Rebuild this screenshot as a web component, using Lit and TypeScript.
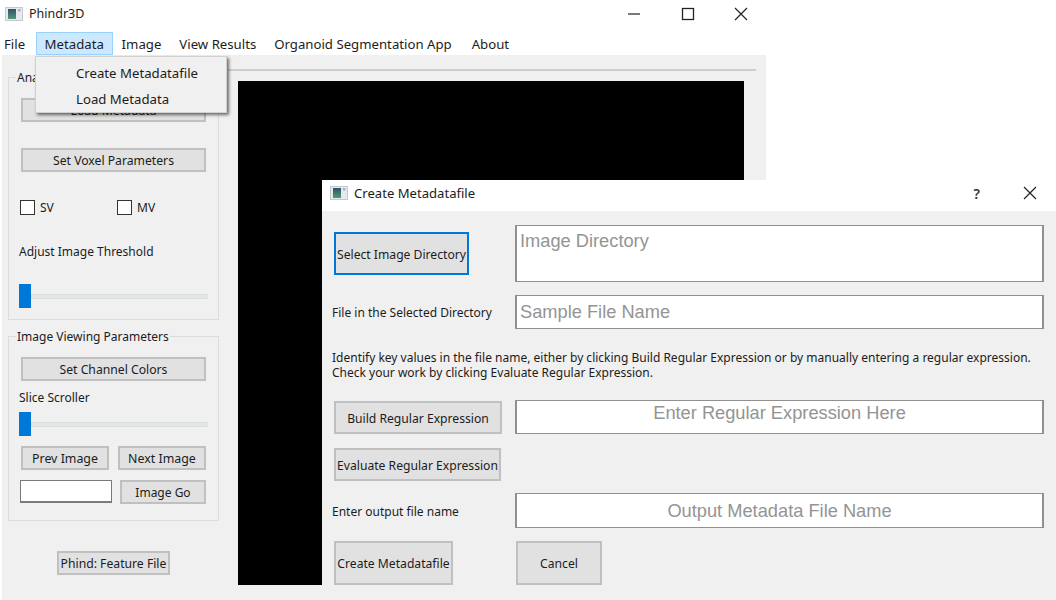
import { LitElement, html, css, svg } from "lit";
import { customElement } from "lit/decorators.js";

const appIcon = html`<svg class="appicon" width="19" height="16" viewBox="0 0 19 16">
  <defs><linearGradient id="g" x1="0" y1="0" x2="0" y2="1"><stop offset="0" stop-color="#33506a"/><stop offset="1" stop-color="#4f9a78"/></linearGradient></defs>
  <rect x="0.5" y="1.5" width="17" height="13" fill="#e6eaec" stroke="#c4cacd"/>
  <rect x="3" y="3" width="8" height="10" fill="url(#g)"/>
  <rect x="13" y="3" width="2.5" height="2.5" fill="#9fb4c4"/>
</svg>`;

const closeIcon = svg`<path d="M1 1 L13 13 M13 1 L1 13" stroke="#222" stroke-width="1.2" fill="none"/>`;

@customElement("app-root")
export class AppRoot extends LitElement {
  static styles = css`
    :host {
      display: block;
      position: relative;
      width: 1056px;
      height: 600px;
      overflow: hidden;
      background: #fff;
      font-family: "Noto Sans", "Open Sans", sans-serif;
      font-size: 12px;
      color: #1c1c1c;
    }
    * { box-sizing: border-box; }
    .win { position: absolute; display: flex; flex-direction: column; background: #fff; }
    .main { left: 0; top: 0; width: 766px; height: 600px; }
    .dialog { left: 322px; top: 180px; width: 734px; height: 420px; }
    .titlebar { display: flex; align-items: center; height: 30px; flex: none; padding: 0 0 3px 5px; font-size: 12.5px; }
    .title { margin-left: 5px; }
    .controls { margin-left: auto; display: flex; align-items: center; }
    .main .controls { gap: 39.5px; padding-right: 18px; }
    .ctl { display: block; }
    .menubar { display: flex; height: 25px; flex: none; padding-top: 2px; font-size: 13.2px; }
    .menubar span { display: flex; align-items: center; height: 23px; padding: 0 8px; border: 1px solid transparent; }
    .menubar span:first-child { padding: 0 9.5px 0 3px; }
    .menubar span.active { background: #cce8ff; border-color: #99d1ff; width: 77px; padding: 0 8px; }
    .menubar span:last-child { margin-left: 2px; }
    .content { flex: 1; margin-left: 2px; background: #f0f0f0; display: flex; min-height: 0; }
    .left { width: 236px; flex: none; padding: 22px 0 0 6px; display: flex; flex-direction: column; align-items: flex-start; }
    .group { position: relative; width: 211px; border: 1px solid #dcdcdc; padding: 0 12px; }
    .g1 { height: 243px; padding-top: 20px; }
    .g2 { height: 185px; margin-top: 16px; padding-top: 20px; }
    .legend { position: absolute; left: 7px; top: -8px; background: #f0f0f0; padding: 0 1px; line-height: 15px; white-space: nowrap; }
    .btn { display: flex; align-items: center; justify-content: center; background: #e1e1e1; border: 2px solid #c0c0c0; height: 24px; white-space: nowrap; flex: none; }
    .wide { width: 185px; font-size: 12.2px; }
    .g1 .b2 { margin-top: 26px; }
    .checks { display: flex; margin: 28px 0 0 -1px; height: 15px; align-items: center; }
    .check { display: flex; flex: none; align-items: center; gap: 5px; font-size: 12px; width: 97px; }
    .box { width: 15px; height: 15px; background: #fff; border: 1px solid #333; flex: none; }
    .lab { line-height: 16px; margin-left: -2px; }
    .g1 .lab { margin-top: 29px; }
    .slider { display: flex; align-items: center; height: 24px; margin-left: -2px; width: 189px; }
    .thumb { width: 12px; height: 24px; background: #0078d7; flex: none; }
    .track { flex: 1; height: 5px; background: #e3e6e6; border: 1px solid #dcdfdf; }
    .g1 .slider { margin-top: 24px; }
    .g2 .lab { margin-top: 9px; }
    .g2 .slider { margin-top: 6px; }
    .pair { display: flex; justify-content: space-between; margin-top: 10px; font-size: 12.4px; }
    .pair .btn { width: 88px; }
    .pair2 { display: flex; justify-content: space-between; margin: 10px 0 0 -1px; }
    .smallinput { width: 92px; height: 23px; background: #fff; border: 1px solid #7a7a7a; border-width: 1px 1px 2px 1px; }
    .pair2 .btn { width: 86px; }
    .phind { width: 113px; margin: 30px 0 0 49px; font-size: 12.2px; }
    .right { flex: 1; padding: 14px 10px 15px 0; display: flex; flex-direction: column; }
    .rule { height: 2px; background: #cdcdcd; flex: none; margin-left: -10px; }
    .canvas { flex: 1; background: #000; margin: 10px 12px 0 0; }
    .menu { position: absolute; left: 35px; top: 56px; width: 192px; height: 57px; background: #f0f0f0; border: 1px solid #d0d0d0; box-shadow: 2px 2px 3px rgba(0,0,0,.55); padding: 3px 0 0 40px; font-size: 13.2px; z-index: 2; }
    .menu div { height: 26px; display: flex; align-items: center; }
    .dialog .titlebar { padding-left: 8px; padding-bottom: 4px; font-size: 13.1px; }
    .dialog .title { margin-left: 5px; }
    .dialog .controls { gap: 43px; padding-right: 19px; }
    .help { font-size: 14px; font-weight: 600; color: #333; }
    .dbody { flex: 1; margin-top: 1px; background: #f0f0f0; padding: 14px 12px 0 10px; display: grid; grid-template-columns: 183px 529px; grid-template-rows: 57px 47px 71px 34px 47px 47px 57px; align-items: end; }
    .dbody > * { min-width: 0; }
    .dbody .btn { font-size: 12.15px; }
    .b-select { width: 135px; height: 43px; margin: 0 0 7px 2px; padding-top: 2px; }
    .dbody .b-select { border-color: #0078d7; }
    .field { background: #fff; border: 1px solid #909090; border-width: 1px 2px 1px 2px; font-family: "Liberation Sans", Arial, sans-serif; font-size: 18.25px; color: #949494; display: flex; align-items: center; padding-left: 3px; white-space: nowrap; }
    .field.ta { height: 57px; align-items: flex-start; padding-top: 4px; line-height: 22px; }
    .field.f34 { height: 34px; }
    .field.f35 { height: 35px; }
    .field.c { justify-content: center; padding-left: 0; }
    .field.up { padding-bottom: 9px; }
    .dlabel { white-space: nowrap; height: 34px; display: flex; align-items: center; }
    .para { grid-column: 1 / 3; line-height: 15px; white-space: nowrap; align-self: center; padding-top: 1px; }
    .r3 { margin-left: 2px; width: 168px; height: 33px; padding-top: 1px; }
    .r4 { grid-column: 1 / 3; margin-left: 2px; width: 167px; height: 33px; padding-top: 1px; }
    .r6a { margin-left: 2px; width: 119px; height: 44px; padding-top: 1px; }
    .r6b { margin-left: 1px; width: 86px; height: 44px; padding-top: 1px; }
  `;

  render() {
    return html`
      <div class="win main">
        <div class="titlebar">
          ${appIcon}<span class="title">Phindr3D</span>
          <div class="controls">
            <svg class="ctl" width="14" height="14" viewBox="0 0 14 14"><path d="M1 7H13" stroke="#222" stroke-width="1.2"/></svg>
            <svg class="ctl" width="14" height="14" viewBox="0 0 14 14"><rect x="1.5" y="1.5" width="11" height="11" fill="none" stroke="#222" stroke-width="1.3"/></svg>
            <svg class="ctl" width="14" height="14" viewBox="0 0 14 14">${closeIcon}</svg>
          </div>
        </div>
        <div class="menubar">
          <span>File</span><span class="active">Metadata</span><span>Image</span><span>View Results</span><span>Organoid Segmentation App</span><span>About</span>
        </div>
        <div class="content">
          <div class="left">
            <div class="group g1">
              <div class="legend">Analysis Parameters</div>
              <div class="btn wide">Load Metadata</div>
              <div class="btn wide b2">Set Voxel Parameters</div>
              <div class="checks">
                <div class="check"><div class="box"></div>SV</div>
                <div class="check"><div class="box"></div>MV</div>
              </div>
              <div class="lab">Adjust Image Threshold</div>
              <div class="slider"><div class="thumb"></div><div class="track"></div></div>
            </div>
            <div class="group g2">
              <div class="legend">Image Viewing Parameters</div>
              <div class="btn wide">Set Channel Colors</div>
              <div class="lab">Slice Scroller</div>
              <div class="slider"><div class="thumb"></div><div class="track"></div></div>
              <div class="pair"><div class="btn">Prev Image</div><div class="btn">Next Image</div></div>
              <div class="pair2"><div class="smallinput"></div><div class="btn">Image Go</div></div>
            </div>
            <div class="btn phind">Phind: Feature File</div>
          </div>
          <div class="right">
            <div class="rule"></div>
            <div class="canvas"></div>
          </div>
        </div>
      </div>
      <div class="menu"><div>Create Metadatafile</div><div>Load Metadata</div></div>
      <div class="win dialog">
        <div class="titlebar">
          ${appIcon}<span class="title">Create Metadatafile</span>
          <div class="controls">
            <span class="help">?</span>
            <svg class="ctl" width="14" height="14" viewBox="0 0 14 14">${closeIcon}</svg>
          </div>
        </div>
        <div class="dbody">
          <div class="btn b-select">Select Image Directory</div>
          <div class="field ta">Image Directory</div>
          <div class="dlabel">File in the Selected Directory</div>
          <div class="field f34">Sample File Name</div>
          <div class="para">Identify key values in the file name, either by clicking Build Regular Expression or by manually entering a regular expression.<br />Check your work by clicking Evaluate Regular Expression.</div>
          <div class="btn r3">Build Regular Expression</div>
          <div class="field c f34 up">Enter Regular Expression Here</div>
          <div class="btn r4">Evaluate Regular Expression</div>
          <div class="dlabel">Enter output file name</div>
          <div class="field c f35">Output Metadata File Name</div>
          <div class="btn r6a">Create Metadatafile</div>
          <div class="btn r6b">Cancel</div>
        </div>
      </div>
    `;
  }
}
